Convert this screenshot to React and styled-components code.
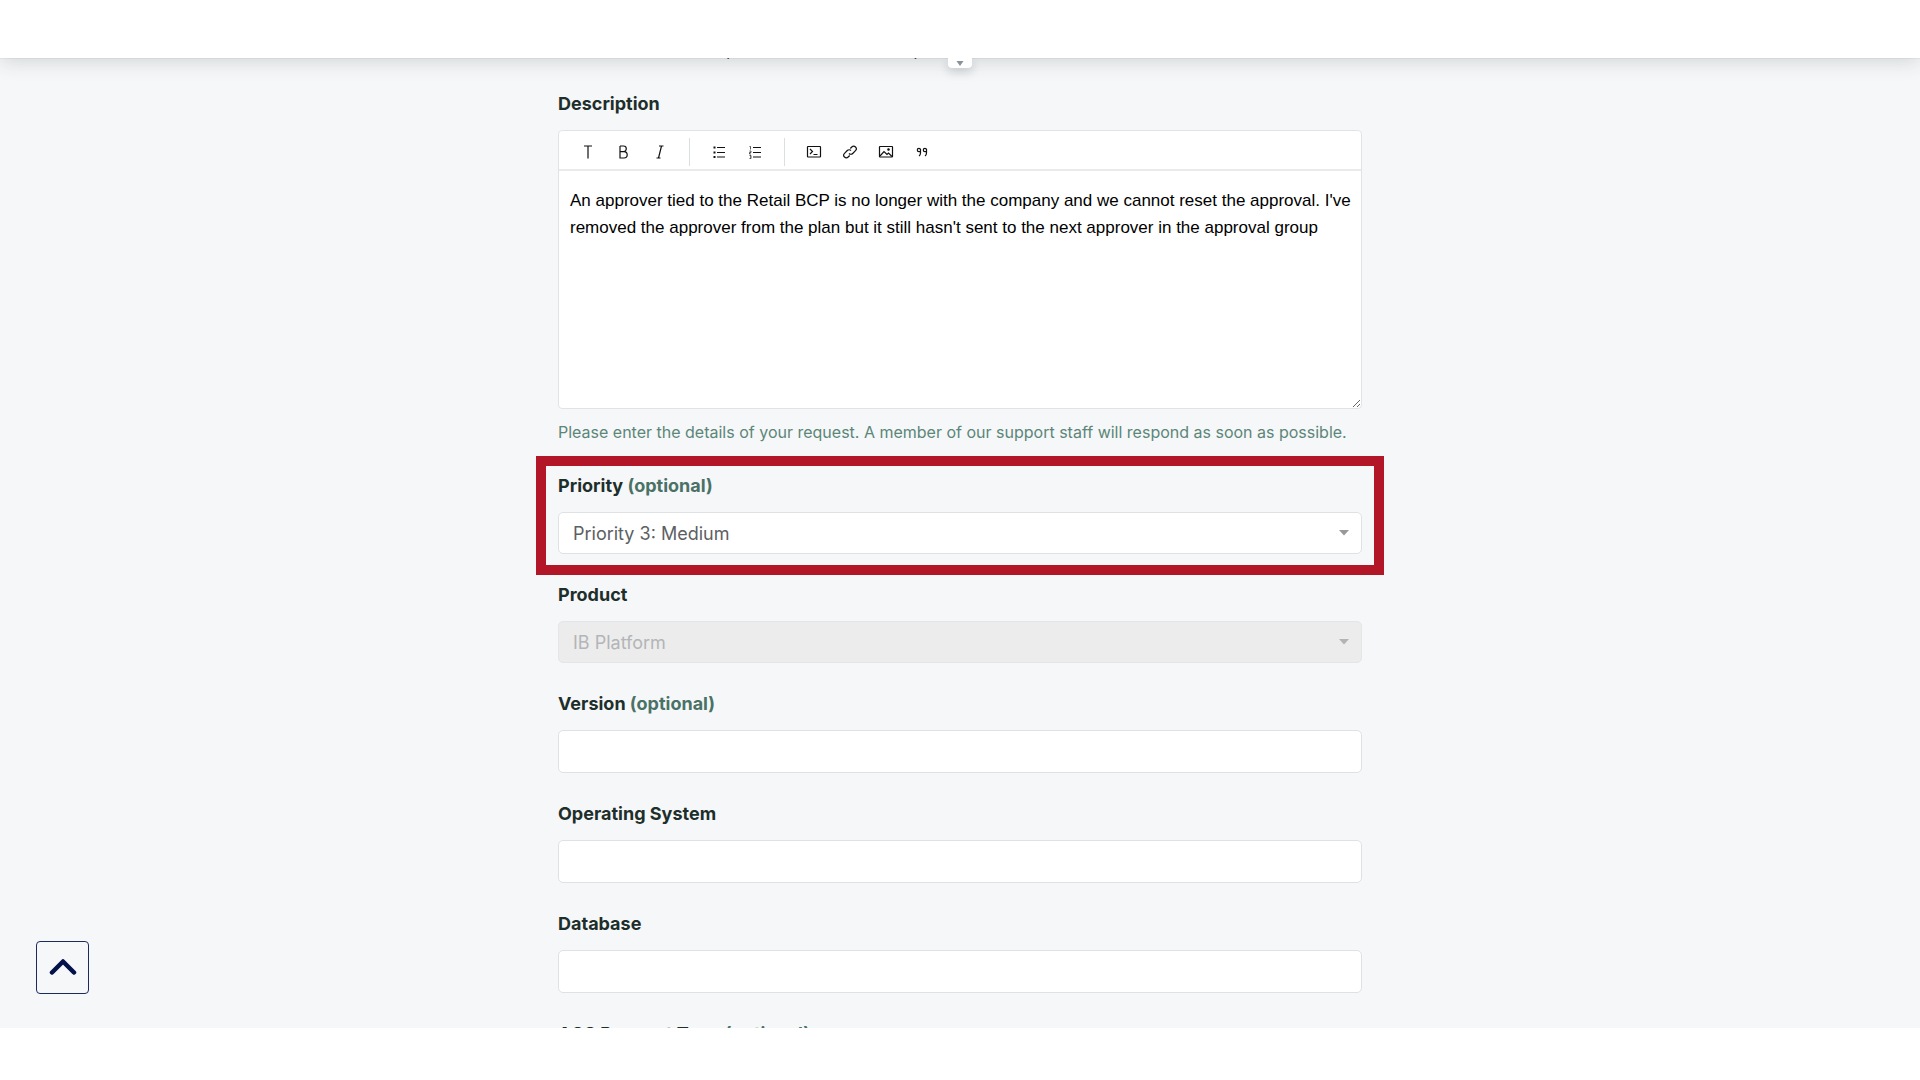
import React, { useState } from "react";
import styled, { createGlobalStyle } from "styled-components";

const GlobalStyle = createGlobalStyle`
  * {
    box-sizing: border-box;
  }

  body {
    margin: 0;
    background: #ffffff;
    font-family: Inter, "Liberation Sans", sans-serif;
    color: #1d2e2b;
  }
`;

const Page = styled.div`
  display: grid;
  grid-template-rows: 58px minmax(0, 1fr) 52px;
  height: 100vh;
`;

const Header = styled.header`
  position: relative;
  z-index: 2;
  background: #ffffff;
  box-shadow: 0 0 1px rgba(30, 50, 45, 0.3), 0 4px 20px rgba(30, 50, 45, 0.16);
`;

const HeaderToggle = styled.button`
  position: absolute;
  top: 100%;
  left: 50%;
  transform: translateX(-50%);
  display: flex;
  align-items: center;
  justify-content: center;
  width: 24px;
  height: 10px;
  padding: 0;
  border: none;
  border-radius: 0 0 4px 4px;
  background: #ffffff;
  box-shadow: 0 4px 10px rgba(30, 50, 45, 0.2);
  clip-path: inset(0 -20px -20px -20px);
  cursor: pointer;
`;

const Main = styled.main`
  position: relative;
  overflow: hidden;
  background: #f6f7f9;
`;

const Form = styled.form`
  width: 100%;
  max-width: 804px;
  margin: 0 auto;
`;

const SubjectHint = styled.p`
  display: flex;
  gap: 184px;
  margin: -16px 0 30px;
  padding-left: 166px;
  font-size: 16px;
  line-height: 18px;
  color: #2b3550;
`;

const Field = styled.div`
  display: flex;
  flex-direction: column;
  gap: 12px;
  margin-bottom: 27px;
`;

const Label = styled.label`
  font-size: 18px;
  font-weight: 700;
  line-height: 28px;
`;

const Optional = styled.span`
  color: #4a7166;
`;

const Hint = styled.p`
  margin: -2px 0 0;
  font-size: 16px;
  line-height: 26px;
  color: #5b8678;
`;

const Editor = styled.div`
  border: 1px solid #e1e4e6;
  border-radius: 4px;
  background: #ffffff;
`;

const Toolbar = styled.div`
  display: flex;
  align-items: center;
  height: 40px;
  padding: 4px 11px 0;
  border-bottom: 2px solid #e8eaeb;
`;

const ToolButton = styled.button`
  display: flex;
  align-items: center;
  justify-content: center;
  width: 36px;
  height: 28px;
  padding: 0;
  border: none;
  background: none;
  color: #111111;
  cursor: pointer;
`;

const Separator = styled.span`
  width: 1px;
  height: 28px;
  margin: 0 11px;
  background: #dcdedf;
`;

const EditorText = styled.textarea`
  display: block;
  width: 100%;
  height: 237px;
  padding: 16px 8px 16px 11px;
  border: none;
  outline: none;
  background: transparent;
  resize: vertical;
  font-family: "Liberation Sans", Arial, sans-serif;
  font-size: 17px;
  line-height: 27px;
  color: #000000;
`;

const control = `
  width: 100%;
  height: 42px;
  padding: 0 14px;
  border: 1px solid #dfe2e4;
  border-radius: 5px;
  background: #ffffff;
  font-family: Inter, "Liberation Sans", sans-serif;
  font-size: 18px;
  color: #5c6063;
`;

const TextInput = styled.input`
  ${control}
  height: 43px;
`;

const SelectWrap = styled.div`
  position: relative;
`;

const Select = styled.select`
  ${control}
  display: block;
  appearance: none;

  &:disabled {
    background: #ececec;
    border-color: #e4e5e6;
    color: #b3b5b7;
    opacity: 1;
  }
`;

const SelectArrow = styled.svg`
  position: absolute;
  top: 18px;
  right: 13px;
  pointer-events: none;
  fill: ${(props) => (props.$muted ? "#b3b3b3" : "#999999")};
`;

const Highlight = styled.div`
  position: absolute;
  inset: -16px -22px -21px;
  border: 10px solid #b31727;
  pointer-events: none;
`;

const HighlightedField = styled(Field)`
  position: relative;
`;

const BackToTop = styled.button`
  position: fixed;
  left: 36px;
  bottom: 86px;
  display: flex;
  align-items: center;
  justify-content: center;
  width: 53px;
  height: 53px;
  padding: 0;
  border: 1px solid #1c2a5e;
  border-radius: 4px;
  background: transparent;
  cursor: pointer;
`;

const Icon = ({ children }) => (
  <svg
    width="16"
    height="16"
    viewBox="0 0 16 16"
    fill="none"
    stroke="currentColor"
    strokeWidth="1.2"
    aria-hidden="true"
  >
    {children}
  </svg>
);

const toolGroups = [
  [
    { name: "Text style", art: <path d="M4 2h8M8 2v12.500" /> },
    {
      name: "Bold",
      art: <path d="M4 2v12h4a3.200 3.200 0 0 0 0-6.400h-4M4 2h3.500a2.800 2.800 0 0 1 0 5.600" />,
    },
    { name: "Italic", art: <path d="M7 2h4.500M4.500 14h4M9.500 2l-3 12" /> },
  ],
  [
    {
      name: "Bulleted list",
      art: (
        <>
          <path d="M6 3.500h8M6 8.500h8M6 13h8" />
          <path d="M2.500 3.500h2M2.500 8.500h2M2.500 13h2" strokeWidth="2" />
        </>
      ),
    },
    {
      name: "Numbered list",
      art: (
        <>
          <path d="M6 3.500h8M6 8.500h8M6 13h8" />
          <path
            d="M2.500 2.500h1v3M2.500 7h1.500v1.500h-1.500v1.500h1.500M2.500 11.500h1.500v3h-1.500M3 13h1"
            strokeWidth="0.700"
          />
        </>
      ),
    },
  ],
  [
    {
      name: "Code block",
      art: (
        <>
          <rect x="1.500" y="2.500" width="13" height="10.500" rx="0.500" />
          <path d="M4 5l2.500 2.500L4 10M7.500 10.500h4" />
        </>
      ),
    },
    {
      name: "Link",
      art: (
        <>
          <path d="M7 9.500a2.600 2.600 0 0 0 3.700 0l2.800-2.800a2.600 2.600 0 0 0-3.700-3.700L8.300 4.500" />
          <path d="M9 6.500a2.600 2.600 0 0 0-3.700 0L2.500 9.300a2.600 2.600 0 0 0 3.700 3.700l1.500-1.500" />
        </>
      ),
    },
    {
      name: "Image",
      art: (
        <>
          <rect x="1.500" y="2.500" width="13" height="10.500" rx="0.500" />
          <path d="M2 12l4-4.500 3 3 1.500-1.500 3.500 3.500" />
          <circle cx="10.500" cy="5.500" r="0.700" fill="currentColor" />
        </>
      ),
    },
    {
      name: "Quote",
      art: (
        <>
          <path d="M6.500 6a1.600 1.600 0 1 0-1.600 1.600h1.600M6.500 5v4q0 2-1.500 3" />
          <path d="M12.500 6a1.600 1.600 0 1 0-1.600 1.600h1.600M12.500 5v4q0 2-1.500 3" />
        </>
      ),
    },
  ],
];

const SelectField = ({ id, value, disabled }) => (
  <SelectWrap>
    <Select id={id} defaultValue={value} disabled={disabled}>
      <option>{value}</option>
    </Select>
    <SelectArrow width="10" height="6" viewBox="0 0 10 6" $muted={disabled}>
      <path d="M0 0h10L5 5.500z" />
    </SelectArrow>
  </SelectWrap>
);

const App = () => {
  const [description, setDescription] = useState(
    "An approver tied to the Retail BCP is no longer with the company and we cannot reset the approval. I've removed the approver from the plan but it still hasn't sent to the next approver in the approval group"
  );

  return (
    <Page>
      <GlobalStyle />
      <Header>
        <HeaderToggle type="button" aria-label="Expand header">
          <svg width="8" height="5" viewBox="0 0 8 5">
            <path d="M0.500 0h7L4 5z" fill="#89919b" />
          </svg>
        </HeaderToggle>
      </Header>

      <Main>
        <Form>
          <SubjectHint>
            <span>(</span>
            <span>)</span>
          </SubjectHint>

          <Field>
            <Label htmlFor="description">Description</Label>
            <Editor>
              <Toolbar>
                {toolGroups.map((group, index) => (
                  <React.Fragment key={group[0].name}>
                    {index > 0 && <Separator />}
                    {group.map((tool) => (
                      <ToolButton
                        key={tool.name}
                        type="button"
                        aria-label={tool.name}
                      >
                        <Icon>{tool.art}</Icon>
                      </ToolButton>
                    ))}
                  </React.Fragment>
                ))}
              </Toolbar>
              <EditorText
                id="description"
                value={description}
                onChange={(e) => setDescription(e.target.value)}
              />
            </Editor>
            <Hint>
              Please enter the details of your request. A member of our support
              staff will respond as soon as possible.
            </Hint>
          </Field>

          <HighlightedField>
            <Label htmlFor="priority">
              Priority <Optional>(optional)</Optional>
            </Label>
            <SelectField id="priority" value="Priority 3: Medium" />
            <Highlight />
          </HighlightedField>

          <Field>
            <Label htmlFor="product">Product</Label>
            <SelectField id="product" value="IB Platform" disabled />
          </Field>

          <Field>
            <Label htmlFor="version">
              Version <Optional>(optional)</Optional>
            </Label>
            <TextInput id="version" type="text" />
          </Field>

          <Field>
            <Label htmlFor="os">Operating System</Label>
            <TextInput id="os" type="text" />
          </Field>

          <Field>
            <Label htmlFor="database">Database</Label>
            <TextInput id="database" type="text" />
          </Field>

          <Field>
            <Label htmlFor="request-type">
              AGS Request Type <Optional>(optional)</Optional>
            </Label>
            <TextInput id="request-type" type="text" />
          </Field>
        </Form>

        <BackToTop type="button" aria-label="Back to top">
          <svg
            width="28"
            height="18"
            viewBox="0 0 28 18"
            fill="none"
            stroke="#04124a"
            strokeWidth="4.500"
            strokeLinecap="round"
            strokeLinejoin="round"
          >
            <path d="M3 13.500L14 2.500l11 11" />
          </svg>
        </BackToTop>
      </Main>
    </Page>
  );
};

export default App;
